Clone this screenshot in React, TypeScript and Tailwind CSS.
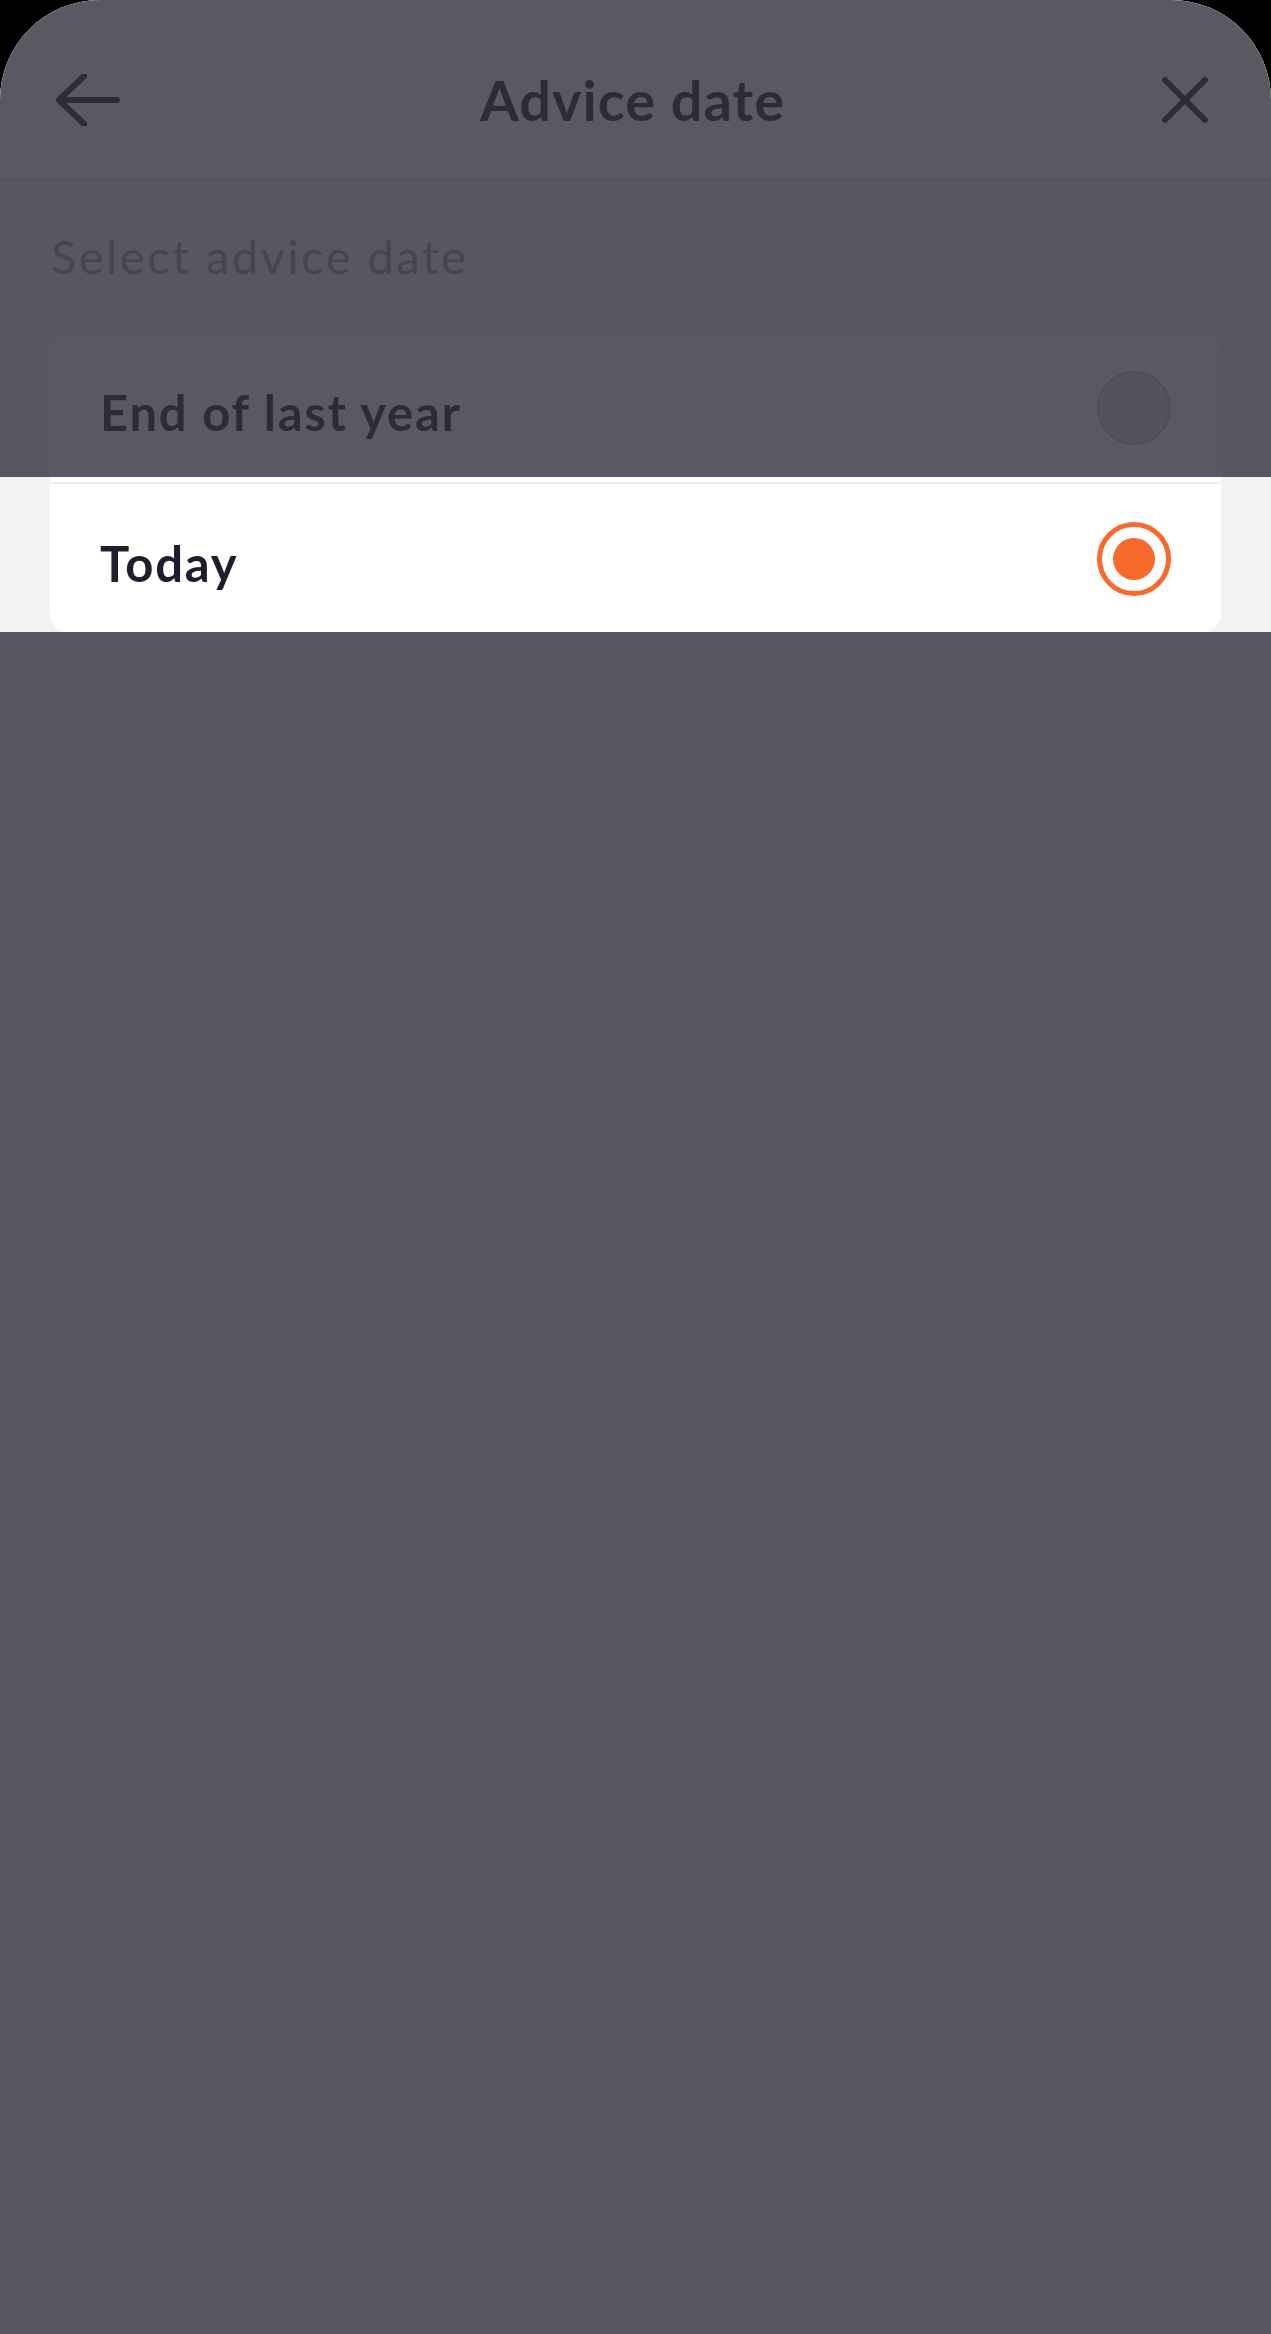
import React from "react";

const FONT = { fontFamily: "Lato, 'Noto Sans', sans-serif" };

function BackIcon() {
  return (
    <svg width="64" height="52" viewBox="0 0 64 52" fill="none">
      <path
        d="M3 26H61M28 2L3 26L28 50"
        stroke="#1e1e2c"
        strokeWidth="6"
        strokeLinecap="round"
        strokeLinejoin="round"
      />
    </svg>
  );
}

function CloseIcon() {
  return (
    <svg width="48" height="48" viewBox="0 0 48 48" fill="none">
      <path
        d="M4 4L44 44M44 4L4 44"
        stroke="#1e1e2c"
        strokeWidth="6"
        strokeLinecap="round"
      />
    </svg>
  );
}

function Radio({ checked }: { checked: boolean }) {
  if (checked) {
    return (
      <div className="w-[74px] h-[74px] rounded-full border-[5px] border-[#f76a2c] flex items-center justify-center">
        <div className="w-[42px] h-[42px] rounded-full bg-[#f76a2c]" />
      </div>
    );
  }
  return <div className="w-[74px] h-[74px] rounded-full border-2 border-[#c2c2ca] bg-[#dedee2]" />;
}

const options = [
  { label: "End of last year", checked: false },
  { label: "Today", checked: true },
];

export default function App() {
  return (
    <div className="bg-black min-h-[2334px] w-full" style={FONT}>
      <div className="relative h-[2334px] bg-[#f3f3f3] rounded-t-[100px] overflow-hidden">
        <header className="h-[180px] bg-white border-b-2 border-[#e4e4e8] grid grid-cols-[1fr_auto_1fr] items-center px-[56px] pt-[22px] pr-[62px]">
          <div className="flex">
            <BackIcon />
          </div>
          <h1 className="text-[56px] font-bold text-[#1e1e2c] leading-none tracking-[1px]">Advice date</h1>
          <div className="flex justify-end">
            <CloseIcon />
          </div>
        </header>

        <p className="pl-[51px] pt-[48px] text-[47px] leading-[56px] tracking-[2.5px] text-[#9a9aa4]">Select advice date</p>

        <div className="mx-[50px] mt-[49px] bg-white rounded-[20px]">
          {options.map((o, i) => (
            <React.Fragment key={o.label}>
              {i > 0 && <div className="h-[2px] bg-[#efeff1]" />}
              <div className="h-[149px] flex items-center justify-between pl-[50px] pr-[50px]">
                <span className="pt-[10px] text-[49px] leading-none font-bold tracking-[1.8px] text-[#1e1e2c]">{o.label}</span>
                <Radio checked={o.checked} />
              </div>
            </React.Fragment>
          ))}
        </div>

        <div className="absolute left-0 right-0 top-0 h-[477px] bg-[rgba(48,48,60,0.8)]" />
        <div className="absolute left-0 right-0 top-[632px] bottom-0 bg-[rgba(48,48,60,0.8)]" />
      </div>
    </div>
  );
}
